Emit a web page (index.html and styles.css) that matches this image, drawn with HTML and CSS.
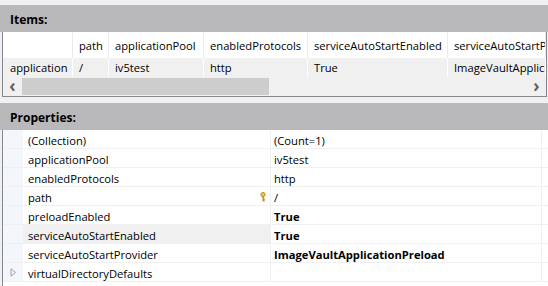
FILE: index.html
```html
<!DOCTYPE html>
<html lang="en">

<head>
    <meta charset="UTF-8">
    <title>Collection Editor</title>
    <link rel="stylesheet" href="styles.css">
</head>

<body>
    <section class="panel">
        <h2 class="kopf">Items:</h2>
        <div class="items">
            <div class="zeile kopfzeile">
                <div></div>
                <div>path</div>
                <div>applicationPool</div>
                <div>enabledProtocols</div>
                <div>serviceAutoStartEnabled</div>
                <div>serviceAutoStartProvider</div>
            </div>
            <div class="zeile daten">
                <div>application</div>
                <div>/</div>
                <div>iv5test</div>
                <div>http</div>
                <div>True</div>
                <div>ImageVaultApplicationPreload</div>
            </div>
            <div class="scroll">
                <div class="pfeil">&lsaquo;</div>
                <div class="daumen"></div>
                <div class="spur"></div>
                <div class="pfeil">&rsaquo;</div>
            </div>
        </div>
    </section>

    <section class="panel props">
        <h2 class="kopf">Properties:</h2>
        <div class="liste">
            <div class="prop"><span class="rand"></span><span class="navn">(Collection)</span><span class="wert">(Count=1)</span></div>
            <div class="prop"><span class="rand"></span><span class="navn">applicationPool</span><span class="wert">iv5test</span></div>
            <div class="prop"><span class="rand"></span><span class="navn">enabledProtocols</span><span class="wert">http</span></div>
            <div class="prop"><span class="rand"></span><span class="navn">path
                <svg class="key" width="6" height="10" viewBox="0 0 6 10">
                    <circle cx="3" cy="2.6" r="2.1" fill="#f2c94c" stroke="#b07d14" stroke-width="0.9"/>
                    <rect x="2.5" y="4.4" width="1.3" height="5" fill="#b07d14"/>
                    <rect x="3.6" y="6.6" width="1.5" height="1" fill="#b07d14"/>
                    <rect x="3.6" y="8.4" width="1.2" height="1" fill="#b07d14"/>
                </svg></span><span class="wert">/</span></div>
            <div class="prop"><span class="rand"></span><span class="navn">preloadEnabled</span><span class="wert fed">True</span></div>
            <div class="prop valgt"><span class="rand"></span><span class="navn">serviceAutoStartEnabled</span><span class="wert fed">True</span></div>
            <div class="prop"><span class="rand"></span><span class="navn">serviceAutoStartProvider</span><span class="wert fed">ImageVaultApplicationPreload</span></div>
            <div class="prop"><span class="rand">
                <svg width="7" height="9" viewBox="0 0 7 9"><path d="M1 0.8 L5.6 4.5 L1 8.2 Z" fill="none" stroke="#a0a0a0" stroke-width="1"/></svg>
            </span><span class="navn">virtualDirectoryDefaults</span><span class="wert"></span></div>
        </div>
    </section>
</body></html>
```

FILE: styles.css
```css
body {
    margin: 0;
    background-color: #f0f0f0;
    font-family: "Open Sans", "Noto Sans", sans-serif;
    font-size: 11.2px;
    color: #000;
    overflow: hidden;
}

.panel {
    padding-top: 5px;
}

.props {
    padding-top: 6px;
}

.kopf {
    margin: 0;
    height: 25px;
    padding-top: 2px;
    line-height: 25px;
    padding-left: 10px;
    background-color: #b9b8bb;
    font-size: 12px;
    font-weight: bold;
}

.items {
    margin-left: 2px;
    width: 543px;
    border-left: 1px solid #828790;
    border-right: 1px solid #828790;
    border-bottom: 1px solid #828790;
    background-color: #fff;
}

.zeile {
    display: grid;
    grid-template-columns: 70px 36px 95px 104px 140px 1fr;
    white-space: nowrap;
    overflow: hidden;
}

.zeile div {
    padding-left: 6px;
    border-right: 1px solid #e8ecf2;
    overflow: hidden;
}

.zeile div:first-child {
    padding-left: 7px;
}

.kopfzeile {
    height: 26px;
    line-height: 28px;
}

.daten {
    height: 19px;
    line-height: 20px;
    background-color: #f0f0f0;
}

.daten div {
    border-right-color: #fff;
}

.scroll {
    display: flex;
    height: 19px;
    background-color: #f0f0f0;
}

.pfeil {
    width: 19px;
    line-height: 17px;
    text-align: center;
    font-size: 17px;
    font-weight: bold;
    color: #606060;
}

.daumen {
    width: 247px;
    margin: 1px 0;
    background-color: #cdcdcd;
}

.spur {
    flex: 1;
}

.liste {
    margin-left: 2px;
    width: 545px;
    border-left: 1px solid #828790;
    background-color: #fff;
    height: 160px;
}

.prop {
    display: flex;
    height: 18px;
    line-height: 21px;
    border-bottom: 1px solid #f0f0f0;
    white-space: nowrap;
}

.rand {
    width: 20px;
    background-color: #f3f6fb;
    display: flex;
    align-items: center;
    justify-content: center;
}

.navn {
    width: 242px;
    padding-left: 5px;
    border-right: 1px solid #f0f0f0;
    position: relative;
}

.key {
    position: absolute;
    right: 4px;
    top: 5px;
}

.wert {
    width: 267px;
    padding-left: 3px;
    border-right: 1px solid #f0f0f0;
}

.fed {
    font-weight: bold;
}

.valgt .navn {
    background-color: #f0f0f0;
}
```
